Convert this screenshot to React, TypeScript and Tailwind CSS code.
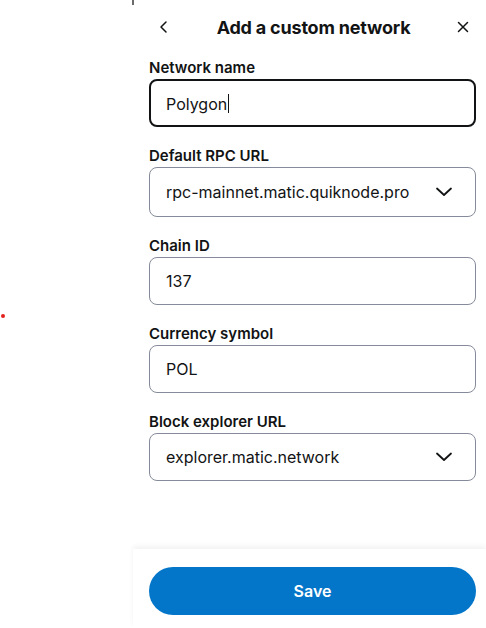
import React from "react";

const font = { fontFamily: "Inter, 'Open Sans', sans-serif" };

function Chevron() {
  return (
    <svg width="18" height="10" viewBox="0 0 18 10" fill="none" className="shrink-0">
      <path d="M2 1.5 9 8l7-6.5" stroke="#121314" strokeWidth="1.8" strokeLinecap="round" strokeLinejoin="round" />
    </svg>
  );
}

function Field({
  label,
  value,
  focused = false,
  select = false,
  tall = false,
}: {
  label: string;
  value: string;
  focused?: boolean;
  select?: boolean;
  tall?: boolean;
}) {
  const box = focused
    ? "flex h-[48px] items-center rounded-lg border-2 border-[#121314] pl-[15px] pr-[22px]"
    : tall
      ? "flex h-[50px] items-center rounded-lg border border-[#858b9a] pl-4 pr-[22px]"
      : "flex h-[48px] items-center rounded-lg border border-[#858b9a] pl-4 pr-[22px]";
  return (
    <div className="flex flex-col">
      <label className="h-[22px] text-[15px] font-semibold leading-[22px] text-[#121314]">{label}</label>
      <div className={box}>
        <span className="flex-1 truncate text-[16px] text-[#121314]">
          {value}
          {focused && <span className="ml-px inline-block h-[19px] w-px translate-y-[3px] bg-[#121314]" />}
        </span>
        {select && <Chevron />}
      </div>
    </div>
  );
}

export default function App() {
  return (
    <div className="relative flex h-[628px] w-[486px] overflow-hidden bg-white" style={font}>
      <div className="relative w-[133px] shrink-0">
        <span className="absolute left-[1px] top-[314px] h-[4px] w-[4px] rounded-full bg-[#e3201b]" />
        <span className="absolute right-[-1px] top-0 h-[5px] w-[2px] bg-[#6b6b6b]" />
      </div>
      <div className="flex min-w-0 flex-1 flex-col">
        <div className="flex h-[57px] items-start pl-4 pr-[10px] pt-[16px]">
          <div className="flex h-[22px] w-full items-center">
            <svg width="24" height="22" viewBox="0 0 24 22" fill="none" className="ml-[3px] shrink-0">
              <path d="M14 6 9 11l5 5" stroke="#121314" strokeWidth="1.5" strokeLinecap="round" strokeLinejoin="round" />
            </svg>
            <h1 className="flex-1 text-center text-[18px] font-bold tracking-[-0.2px] text-[#121314]">Add a custom network</h1>
            <svg width="24" height="22" viewBox="0 0 24 22" fill="none" className="mr-[1px] shrink-0">
              <path d="M7.5 6.5 16.5 15.5M16.5 6.5 7.5 15.5" stroke="#121314" strokeWidth="1.5" strokeLinecap="round" />
            </svg>
          </div>
        </div>
        <div className="flex flex-1 flex-col gap-[18px] pl-4 pr-[10px]">
          <Field label="Network name" value="Polygon" focused />
          <Field label="Default RPC URL" value="rpc-mainnet.matic.quiknode.pro" select tall />
          <Field label="Chain ID" value="137" />
          <Field label="Currency symbol" value="POL" />
          <Field label="Block explorer URL" value="explorer.matic.network" select />
        </div>
        <div className="h-[79px] pl-4 pr-[10px] pt-[18px] shadow-[0_-3px_5px_rgba(0,0,0,0.05)]">
          <button className="flex h-[48px] w-full items-center justify-center rounded-full bg-[#0376c9] text-[16px] font-semibold text-white">
            Save
          </button>
        </div>
      </div>
    </div>
  );
}
